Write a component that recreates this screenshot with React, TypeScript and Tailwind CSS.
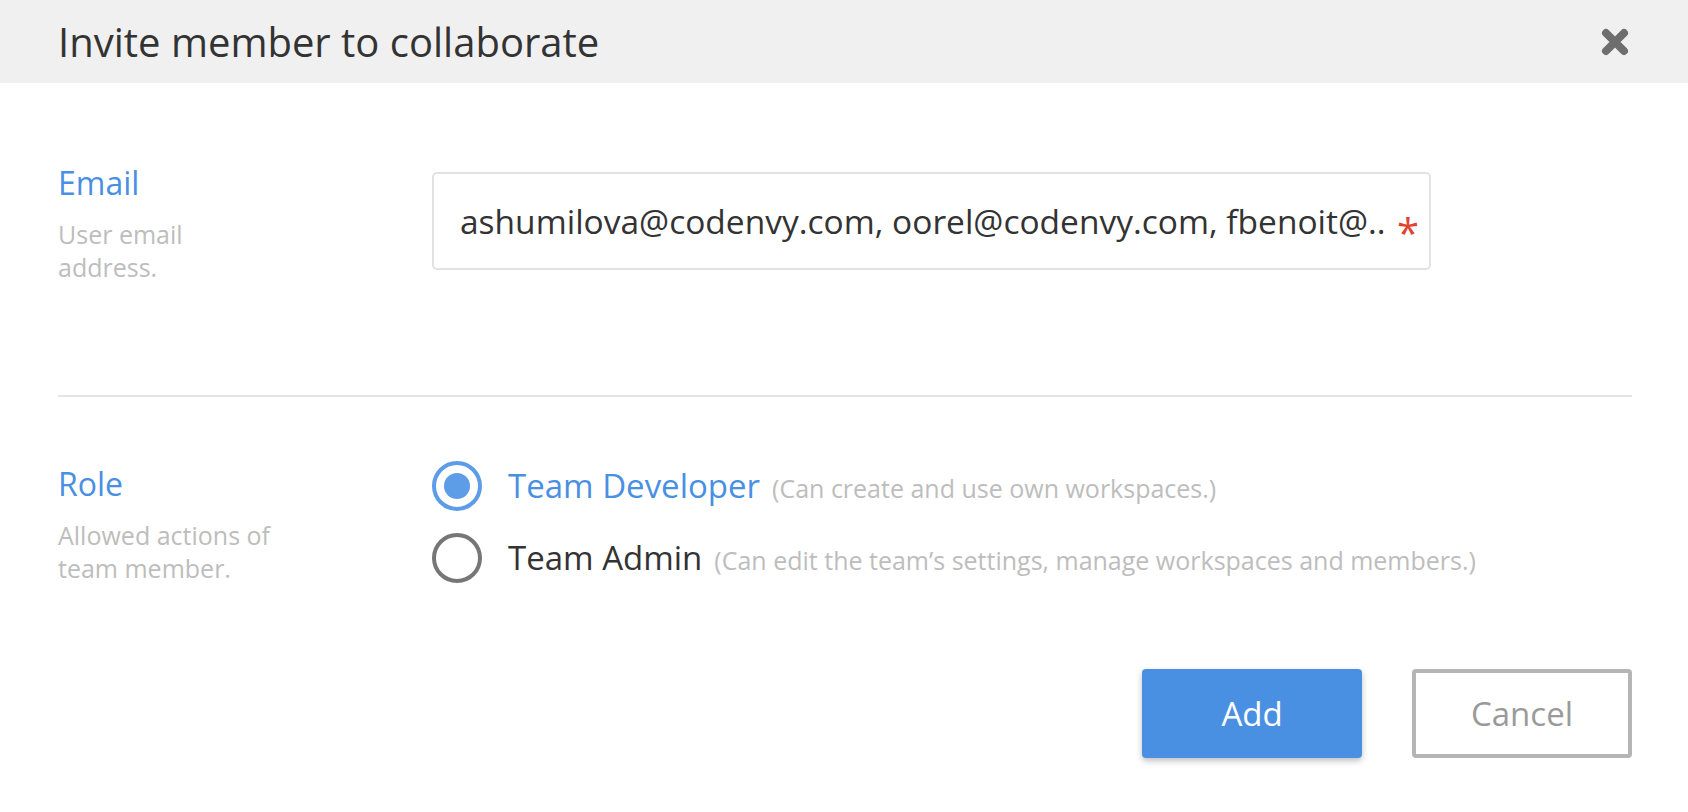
import React, { useState } from 'react';

const font = { fontFamily: '"Open Sans", "Liberation Sans", sans-serif' };

function CloseIcon() {
  return (
    <svg width="30" height="30" viewBox="0 0 30 30" className="text-[#6e6e6e]">
      <path d="M6 6 L24 24 M24 6 L6 24" stroke="currentColor" strokeWidth="8" strokeLinecap="round" fill="none" />
    </svg>
  );
}

function Radio({ checked }: { checked: boolean }) {
  return (
    <span
      className={`flex h-[50px] w-[50px] shrink-0 items-center justify-center rounded-full border-[4px] ${
        checked ? 'border-[#5d9ce6]' : 'border-[#767676]'
      }`}
    >
      {checked && <span className="h-[26px] w-[26px] rounded-full bg-[#5d9ce6]" />}
    </span>
  );
}

const roles = [
  { id: 'dev', name: 'Team Developer', hint: '(Can create and use own workspaces.)' },
  { id: 'admin', name: 'Team Admin', hint: '(Can edit the team’s settings, manage workspaces and members.)' },
];

export default function App() {
  const [role, setRole] = useState('dev');

  return (
    <div className="flex h-[812px] w-full flex-col bg-white" style={font}>
      {/* Header */}
      <div className="flex h-[83px] shrink-0 items-center justify-between bg-[#f0f0f0] pl-[58px] pr-[58px]">
        <h1 className="text-[40px] font-normal leading-none text-[#333333]">Invite member to collaborate</h1>
        <button className="flex items-center justify-center">
          <CloseIcon />
        </button>
      </div>

      <div className="flex flex-col pl-[58px] pr-[56px]">
        {/* Email */}
        <div className="flex pt-[80px]">
          <div className="w-[374px] shrink-0">
            <div className="text-[32px] leading-[40px] text-[#4a90e2]">Email</div>
            <div className="mt-[15px] w-[190px] text-[25px] leading-[33px] text-[#bdbdbd]">User email address.</div>
          </div>
          <div className="mt-[9px] flex h-[98px] w-[999px] items-center rounded-[5px] border-2 border-[#e2e2e2] pl-[26px] pr-[10px]">
            <span className="flex-1 overflow-hidden whitespace-nowrap text-[33.5px] text-[#333333]">
              ashumilova@codenvy.com, oorel@codenvy.com, fbenoit@..
            </span>
            <span className="mt-[24px] text-[40px] leading-none text-[#e0442f]">*</span>
          </div>
        </div>

        <div className="mt-[111px] h-[2px] w-full bg-[#e4e4e4]" />

        {/* Role */}
        <div className="flex pt-[64px]">
          <div className="w-[374px] shrink-0 pt-[3px]">
            <div className="text-[32px] leading-[40px] text-[#4a90e2]">Role</div>
            <div className="mt-[15px] w-[240px] text-[25px] leading-[33px] text-[#bdbdbd]">
              Allowed actions of team member.
            </div>
          </div>
          <div className="flex flex-col gap-[22px]">
            {roles.map((r) => (
              <label key={r.id} className="flex h-[50px] cursor-pointer items-center" onClick={() => setRole(r.id)}>
                <Radio checked={role === r.id} />
                <span
                  className={`ml-[26px] text-[33px] ${role === r.id ? 'text-[#4a90e2]' : 'text-[#333333]'}`}
                >
                  {r.name}
                </span>
                <span className="ml-[12px] mt-[6px] text-[25px] text-[#bdbdbd]">{r.hint}</span>
              </label>
            ))}
          </div>
        </div>

        {/* Actions */}
        <div className="mt-[84px] flex justify-end gap-[50px]">
          <button className="flex h-[89px] w-[220px] items-center justify-center rounded-[4px] bg-[#4a90e2] text-[33px] text-white shadow-[0_3px_6px_rgba(0,0,0,0.25)]">
            Add
          </button>
          <button className="flex h-[89px] w-[220px] items-center justify-center rounded-[4px] border-[4px] border-[#b5b5b5] bg-white text-[33px] text-[#9a9a9a]">
            Cancel
          </button>
        </div>
      </div>
    </div>
  );
}
